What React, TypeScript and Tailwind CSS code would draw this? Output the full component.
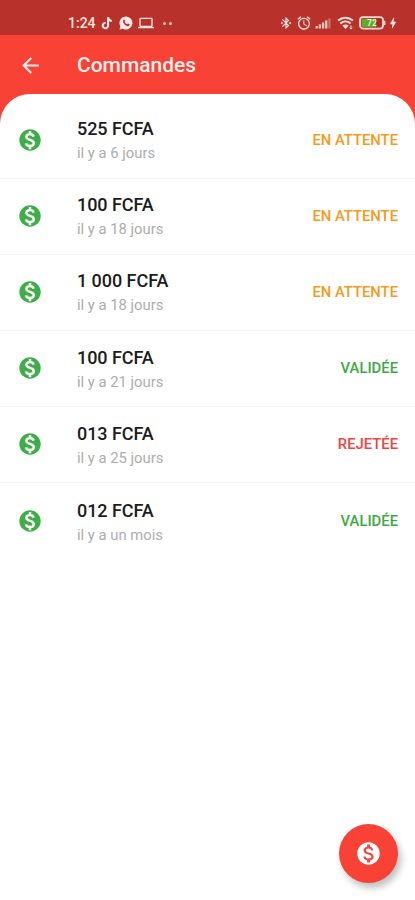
import React from 'react';
import {
  MdArrowBack,
  MdBluetoothConnected,
  MdAlarm,
  MdLaptop,
  MdMonetizationOn,
  MdBolt,
} from 'react-icons/md';

type Status = 'EN ATTENTE' | 'VALIDÉE' | 'REJETÉE';

interface Order {
  amount: string;
  date: string;
  status: Status;
}

const orders: Order[] = [
  { amount: '525 FCFA', date: 'il y a 6 jours', status: 'EN ATTENTE' },
  { amount: '100 FCFA', date: 'il y a 18 jours', status: 'EN ATTENTE' },
  { amount: '1 000 FCFA', date: 'il y a 18 jours', status: 'EN ATTENTE' },
  { amount: '100 FCFA', date: 'il y a 21 jours', status: 'VALIDÉE' },
  { amount: '013 FCFA', date: 'il y a 25 jours', status: 'REJETÉE' },
  { amount: '012 FCFA', date: 'il y a un mois', status: 'VALIDÉE' },
];

const statusColor: Record<Status, string> = {
  'EN ATTENTE': 'text-[#f59a1c]',
  'VALIDÉE': 'text-[#3fa846]',
  'REJETÉE': 'text-[#ee4540]',
};

function Coin() {
  return (
    <svg viewBox="0 0 22 22" className="size-[22px]">
      <circle cx="11" cy="11" r="10.7" fill="#3fae49" />
      <path
        d="M14.7 7.6C14.3 6 12.9 5.1 11 5.1C8.9 5.1 7.4 6.2 7.4 7.8C7.4 9.6 8.8 10.3 11 10.9C13.3 11.5 14.8 12.3 14.8 14.2C14.8 16 13.2 17 11 17C8.8 17 7.3 16.1 7.1 14.3M11 1.9V5.1M11 17V20.2"
        fill="none"
        stroke="#fff"
        strokeWidth="2.4"
      />
    </svg>
  );
}

function NoteIcon() {
  return (
    <svg viewBox="0 0 12 14" className="h-3.5 w-3">
      <path
        d="M7.1 1V9.6A2.7 2.7 0 1 1 4.6 6.9M7.1 1.4C7.4 3.5 8.7 4.7 10.7 4.9"
        fill="none"
        stroke="#fde9e6"
        strokeWidth="2"
      />
    </svg>
  );
}

function SignalIcon() {
  return (
    <svg viewBox="0 0 17 12" className="h-3 w-[17px]">
      <g fill="#f5c5be">
        <rect x="0.5" y="9" width="2.3" height="2.5" />
        <rect x="3.7" y="7.4" width="2.3" height="4.1" />
        <rect x="6.9" y="5.4" width="2.3" height="6.1" />
        <rect x="10.1" y="3.4" width="2.3" height="8.1" />
        <rect x="13.3" y="1.4" width="2.3" height="10.1" opacity="0.4" />
      </g>
    </svg>
  );
}

function WifiIcon() {
  return (
    <svg viewBox="0 0 17 14" className="h-3.5 w-[17px]">
      <g fill="none" stroke="#f8dcd8" strokeWidth="2">
        <path d="M1 4.6C5.4 0.8 11.6 0.8 16 4.6" />
        <path d="M3.4 7.4C6.4 4.8 10.6 4.8 13.6 7.4" />
      </g>
      <path d="M8.5 13L5.3 9.5C7.1 8 9.9 8 11.7 9.5Z" fill="#f8dcd8" />
      <path d="M14 9.5v3.6M12.6 11.7l1.4 1.4l1.4-1.4" fill="none" stroke="#f8dcd8" strokeWidth="1" />
    </svg>
  );
}

function BatteryIcon() {
  return (
    <svg viewBox="0 0 27 14" className="h-3.5 w-[27px]">
      <rect x="1" y="1.2" width="23" height="11.4" rx="3" fill="#b7312a" stroke="#f6d9ce" strokeWidth="1.8" />
      <path d="M24.8 4.8h1.6v4.2h-1.6z" fill="#f6d9ce" />
      <rect x="2.6" y="2.8" width="15" height="8.2" rx="1" fill="#5bab2c" />
      <path d="M17 2.8h5.4v8.2H17z" fill="#a52a22" />
      <text x="8" y="10" fontSize="8.5" fontWeight="700" fill="#e0f0cf" fontFamily="Roboto, sans-serif">
        72
      </text>
    </svg>
  );
}

export default function App() {
  return (
    <div className="relative flex h-[900px] w-[415px] flex-col overflow-hidden bg-[#f74235] font-['Roboto',sans-serif]">
      <div className="flex h-[35px] shrink-0 items-end justify-between bg-[#b8322b] pr-[15px] pb-1 pl-[68px] text-[#fbe3df]">
        <div className="flex h-4 items-center">
          <span className="w-[33px] text-[14px] leading-4 font-medium">1:24</span>
          <NoteIcon />
          <svg viewBox="0 0 14 14" className="ml-[6px] size-3.5">
            <path d="M7 0.5A6.5 6.5 0 1 1 3.8 12.7L0.5 13.5L1.4 10.3A6.5 6.5 0 0 1 7 0.5Z" fill="#fde9e6" />
            <path
              d="M4.3 4C4.8 3.1 5.5 3.3 5.7 3.9L6.1 5C6.1 5.4 5.6 5.7 5.6 5.9C6.1 7 7 7.8 8.1 8.3C8.4 8.3 8.8 7.6 9.1 7.6L10.5 8.3C10.7 9.2 9.9 10.1 9 10.2C6.6 10.2 3.9 7.4 4 5.1Z"
              fill="#b8322b"
            />
          </svg>
          <MdLaptop className="ml-[5px] size-4" />
          <span className="ml-[9px] size-[3px] rounded-full bg-[#f3c0b9]" />
          <span className="ml-[3px] size-[3px] rounded-full bg-[#f3c0b9]" />
        </div>
        <div className="flex h-4 items-center">
          <MdBluetoothConnected className="size-3.5" />
          <MdAlarm className="ml-[3px] size-4" />
          <span className="ml-[3px]"><SignalIcon /></span>
          <span className="ml-[5px]"><WifiIcon /></span>
          <span className="ml-[5px]"><BatteryIcon /></span>
          <MdBolt className="size-3.5" />
        </div>
      </div>

      <header className="flex h-[59px] shrink-0 items-center pl-[18px] text-white">
        <MdArrowBack className="mt-px size-[25px] text-[#ffeceb]" />
        <h1 className="ml-[34px] text-[21px] leading-6 font-medium text-[#fff0ee]">Commandes</h1>
      </header>

      <main className="flex-1 rounded-t-[30px] bg-white pt-[8.5px]">
        <ul>
          {orders.map((order, i) => (
            <li
              key={i}
              className="flex h-[76.2px] items-center border-b border-[#f5f5f5] pr-[17px] pl-[19px] last:border-0"
            >
              <div className="-mt-px"><Coin /></div>
              <div className="mt-[3px] ml-9 flex-1">
                <p className="text-[18px] leading-6 font-medium tracking-[-0.05px] text-[#1c1c1c]">{order.amount}</p>
                <p className="text-[14.8px] leading-[25px] text-[#adadad]">{order.date}</p>
              </div>
              <span className={`-mt-px text-[14.8px] font-medium ${statusColor[order.status]}`}>{order.status}</span>
            </li>
          ))}
        </ul>
      </main>

      <button
        aria-label="Nouvelle commande"
        className="absolute right-[17px] bottom-[17px] flex size-[59px] items-center justify-center rounded-full bg-[#f74235] text-white shadow-[3px_5px_7px_rgba(0,0,0,0.25)]"
      >
        <MdMonetizationOn className="size-[27px]" />
      </button>
    </div>
  );
}
